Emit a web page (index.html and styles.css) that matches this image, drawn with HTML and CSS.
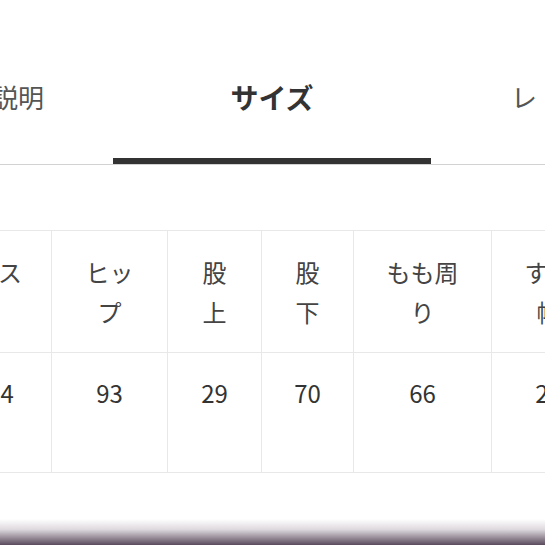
FILE: index.html
```html
<!DOCTYPE html>
<html lang="ja">
<head>
<meta charset="utf-8">
<link rel="stylesheet" href="styles.css">
</head>
<body>
<div class="page">
  <nav class="tabs">
    <div class="tab tab-prev">商品説明</div>
    <div class="tab tab-active">サイズ</div>
    <div class="tab tab-next">レビュー</div>
  </nav>
  <div class="table-wrap">
    <table class="size-table">
      <colgroup>
        <col class="c0"><col class="c1"><col class="c2"><col class="c3"><col class="c4"><col class="c5">
      </colgroup>
      <tr class="head">
        <th class="first">ウエス<br>ト</th>
        <th>ヒッ<br>プ</th>
        <th>股<br>上</th>
        <th>股<br>下</th>
        <th>もも周<br>り</th>
        <th>すそ<br>幅</th>
      </tr>
      <tr class="vals">
        <td>64</td>
        <td>93</td>
        <td>29</td>
        <td>70</td>
        <td>66</td>
        <td>21</td>
      </tr>
    </table>
  </div>
  <div class="fade"></div>
</div>
</body>
</html>
```
FILE: styles.css
```css
html, body {
  margin: 0;
  padding: 0;
  background: #ffffff;
}
body {
  font-family: "Noto Sans CJK JP", "Noto Sans", sans-serif;
  width: 545px;
  height: 545px;
  overflow: hidden;
}
.page {
  position: relative;
  width: 545px;
  height: 545px;
  overflow: hidden;
}
.tabs {
  display: flex;
  border-bottom: 1px solid #d2d2d2;
  height: 164px;
}
.tab {
  flex: none;
  box-sizing: border-box;
  height: 164px;
  padding-top: 77px;
  line-height: 40px;
  font-size: 26px;
  color: #555555;
  white-space: nowrap;
  border-bottom: 6px solid transparent;
}
.tab-prev {
  width: 113px;
  display: flex;
  justify-content: flex-end;
  padding-right: 69px;
}
.tab-active {
  width: 318px;
  text-align: center;
  font-weight: 700;
  font-size: 28px;
  color: #333333;
  border-bottom-color: #333333;
}
.tab-next {
  padding-left: 80px;
  letter-spacing: 4px;
}
.table-wrap {
  margin-top: 65px;
  overflow: hidden;
}
.size-table {
  margin-left: -51px;
  border-collapse: collapse;
  table-layout: fixed;
  width: 656px;
}
.c0 { width: 102px; }
.c1 { width: 116px; }
.c2 { width: 94px; }
.c3 { width: 92px; }
.c4 { width: 138px; }
.c5 { width: 114px; }
.size-table th,
.size-table td {
  border: 1px solid #e8e8e8;
  text-align: center;
  font-size: 24px;
  line-height: 40px;
  padding: 0;
}
.head th {
  height: 121px;
  font-weight: 400;
  color: #444444;
  vertical-align: middle;
}
.head th.first {
  white-space: nowrap;
  padding-right: 36px;
}
.vals td {
  height: 120px;
  color: #333333;
  vertical-align: top;
  padding-top: 20px;
  box-sizing: border-box;
}
.fade {
  position: absolute;
  left: 0;
  right: 0;
  bottom: 0;
  height: 26px;
  background: linear-gradient(to bottom, rgba(255,255,255,0) 0%, rgba(200,192,200,0.6) 40%, #5a4a5c 100%);
}
```
